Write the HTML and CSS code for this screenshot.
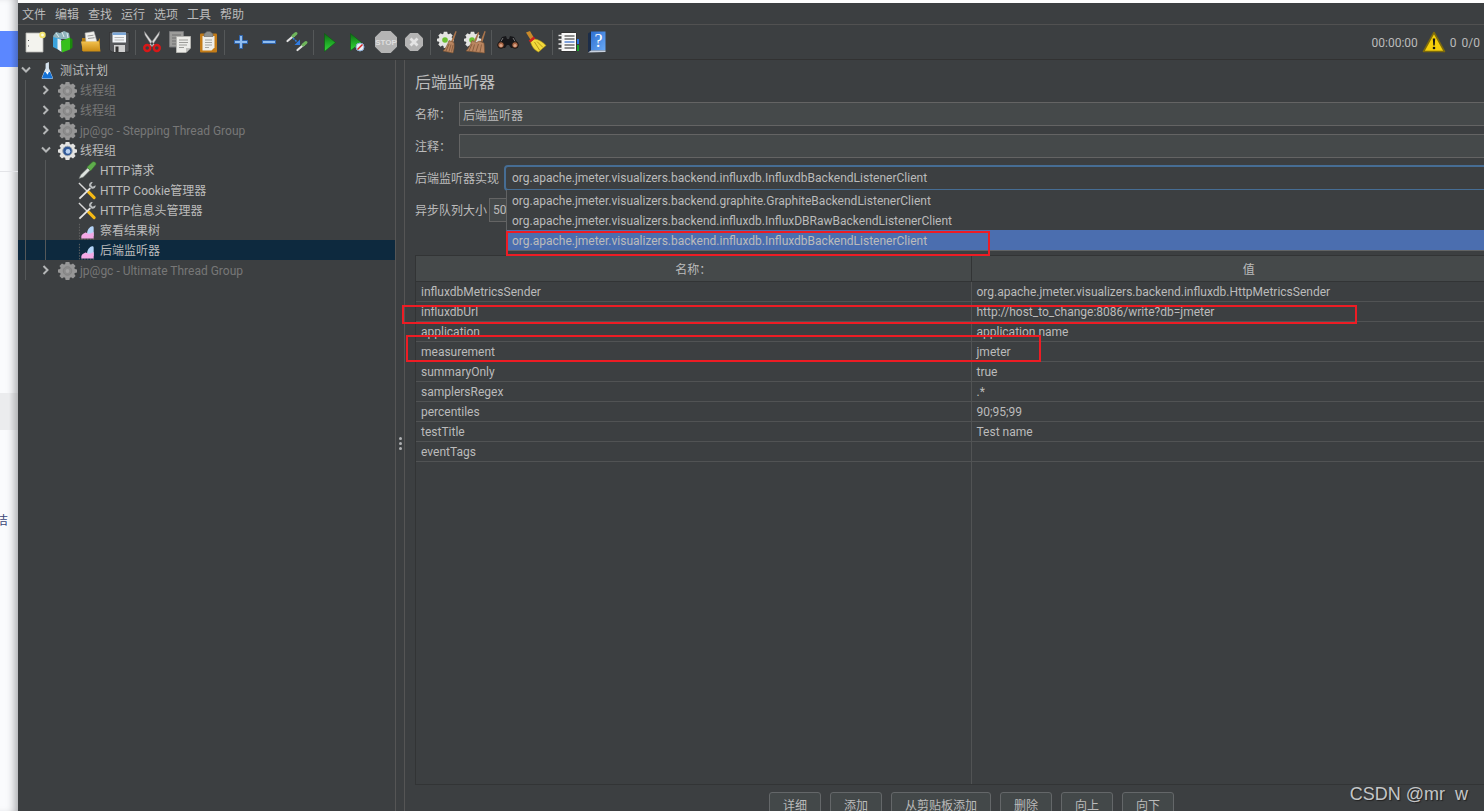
FILE: index.html
```html
<!DOCTYPE html>
<html lang="zh-CN">
	<head>
		<meta charset="UTF-8" />
		<meta name="viewport" content="width=device-width, initial-scale=1.0" />
		<title>后端监听器</title>
		<link rel="stylesheet" href="styles.css">
	</head>
	<body>
		<svg class="defs" aria-hidden="true">
			<defs>
				<linearGradient id="g-green" x1="0" y1="0" x2="0" y2="1">
					<stop offset="0" stop-color="#0d6b12" />
					<stop offset="0.5" stop-color="#1fa726" />
					<stop offset="1" stop-color="#35d83a" />
				</linearGradient>
				<linearGradient id="g-gold" x1="0" y1="0" x2="0" y2="1">
					<stop offset="0" stop-color="#f2c14e" />
					<stop offset="1" stop-color="#c98a12" />
				</linearGradient>
				<linearGradient id="g-blue" x1="0" y1="0" x2="1" y2="1">
					<stop offset="0" stop-color="#2d6fd0" />
					<stop offset="1" stop-color="#69a9f5" />
				</linearGradient>
				<path id="gear" d="M8 1h4l0.500 2.300 1.300 0.500 2-1.300 2.700 2.700-1.300 2 0.500 1.300L20 9v3l-2.300 0.500-0.500 1.300 1.300 2-2.700 2.700-2-1.300-1.300 0.500L12 20H8l-0.500-2.300-1.300-0.500-2 1.300-2.700-2.700 1.300-2-0.500-1.300L0 12V9l2.300-0.500 0.500-1.300-1.300-2 2.700-2.700 2 1.300 1.300-0.500z" />
			</defs>
			<symbol id="i-gear-off" viewBox="0 0 20 20">
				<use href="#gear" fill="#979797" />
				<circle cx="10" cy="10.500" r="4.500" fill="#8c8c8c" stroke="#828282" />
				<circle cx="10" cy="10.500" r="2" fill="#a2a2a2" />
			</symbol>
			<symbol id="i-gear-on" viewBox="0 0 20 20">
				<use href="#gear" fill="#e4e4e2" />
				<circle cx="10" cy="10.500" r="5" fill="#2f5796" stroke="#9aa3ae" />
				<circle cx="10.500" cy="11" r="2.500" fill="#b9d2f2" />
			</symbol>
			<symbol id="i-flask" viewBox="0 0 20 20">
				<path d="M8 2.500L11.500 1v6.500l4 9.500c0.500 1.500-0.500 2-1.500 2H5.500c-1 0-2-0.500-1.500-2l4-9.500z" fill="#d4e2ee" />
				<path d="M6.800 11.500h6l2.400 5.800c0.200 0.800-0.200 1.200-1 1.200H5.400c-0.800 0-1.200-0.400-1-1.200z" fill="#1271d6" />
				<path d="M8 11.500h3.500l-1.500 3z" fill="#fff" />
			</symbol>
			<symbol id="i-dropper" viewBox="0 0 20 20">
				<path d="M1 18.500l2-4L10.500 7l2.500 2.500L5.500 17z" fill="#dfe3e0" stroke="#6f7573" stroke-width="0.600" />
				<path d="M9.500 6.500l1.300-1.300L15 1.200c1.500-1.200 3.800-0.200 4 1.600 0 0.800-0.300 1.200-0.800 1.800L14.500 9l-1.300 1.300z" fill="#5fae4c" stroke="#39742c" stroke-width="0.600" />
			</symbol>
			<symbol id="i-tools" viewBox="0 0 20 20">
				<path d="M1 2l9 9" stroke="#d8d8d8" stroke-width="1.500" />
				<path d="M11 11.500l6 6" stroke="#f5b914" stroke-width="3.200" stroke-linecap="round" />
				<path d="M1.500 18.500L13 7.500" stroke="#e4e4e4" stroke-width="2" />
				<path d="M18.500 4.500l-3 1.500-1.800-1.800L15.500 1c-2.500-0.200-4.500 2-3.700 4.500l2.700 2.700c2.500 0.500 4.500-1.500 4-3.700z" fill="#b9bcbd" />
			</symbol>
			<symbol id="i-graph" viewBox="0 0 20 20">
				<path d="M1.500 3v16H18" stroke="#666" stroke-width="1" stroke-dasharray="1.500 1.500" fill="none" />
				<path d="M9.500 14c0-4.500 2.500-8 5.500-8.500 1-0.200 1.500 0.500 1.500 1.500V16z" fill="#b4d4f8" />
				<path d="M3.500 18.500V16c0.500-2 2-3 3.500-3.500 1.500-1 2.500 0.500 4 1 2 0 3.500-1 5.500-2v7z" fill="#f3a9e6" />
			</symbol>
			<symbol id="i-new" viewBox="0 0 24 24">
				<path d="M3 3h17v19H3z" fill="#f3f3ee" stroke="#b5b5b0" stroke-width="0.800" />
				<path d="M5 10.500h1M5 16h1" stroke="#555" />
				<circle cx="19.500" cy="5" r="3.200" fill="#f2e36a" />
				<circle cx="19.500" cy="5" r="1.400" fill="#fffde0" />
			</symbol>
			<symbol id="i-templates" viewBox="0 0 24 24">
				<path d="M2 6l3-4 4 1 4-2 5 2 1 6H3z" fill="#8fb3bc" />
				<path d="M5 3l3 4M11 2l2 5M16 3l1 5" stroke="#dfeaec" />
				<path d="M2 7l8 2v12l-8-4z" fill="#3aa3dd" />
				<path d="M6.500 8.500l4 1.500v12l-4-3z" fill="#e7f2f5" />
				<path d="M10 11l9-3.500v12L11 22.500z" fill="#37c01b" />
				<path d="M19 7.500l2.500 2v8L19 19.500z" fill="#1b8a0c" />
			</symbol>
			<symbol id="i-open" viewBox="0 0 24 24">
				<path d="M3 8h4l2 3h10l2-3v13H3z" fill="#b07a10" />
				<path d="M6 3l9-1.500L18 12H7z" fill="#f0f0ec" stroke="#aaa" stroke-width="0.600" />
				<path d="M8.500 6l6-0.800M9 8.500l6.500-0.800" stroke="#999" />
				<path d="M2 11.500h18l1.500 10H4z" fill="url(#g-gold)" />
			</symbol>
			<symbol id="i-save" viewBox="0 0 24 24">
				<path d="M2.500 2.500H22V22H5l-2.500-2z" fill="#55575a" stroke="#2b2c2e" stroke-width="0.600" />
				<path d="M5.500 2.500H19v10H5.500z" fill="#f1f4f7" />
				<path d="M5.500 2.500H19V5H5.500z" fill="#7ba7d8" />
				<path d="M7.500 7.500h9.500M7.500 10h9.500" stroke="#b6b6b6" />
				<path d="M7 15h11v7H7z" fill="#cfcfcf" />
				<path d="M8.500 16.500h3V22h-3z" fill="#333" />
			</symbol>
			<symbol id="i-cut" viewBox="0 0 24 24">
				<path d="M4.500 1.500l10 13.500-2 1.500L5 5zM19.500 1.500l-10 13.500 2 1.500L19 5z" fill="#dcdcdc" stroke="#888" stroke-width="0.500" />
				<ellipse cx="7.200" cy="18" rx="3" ry="3" fill="none" stroke="#d81818" stroke-width="2.400" />
				<ellipse cx="16.800" cy="18" rx="3" ry="3" fill="none" stroke="#d81818" stroke-width="2.400" />
			</symbol>
			<symbol id="i-copy" viewBox="0 0 24 24">
				<path d="M1.500 1.500h14V17h-14z" fill="#9c9c9a" stroke="#77787a" />
				<path d="M4 5h9M4 8h4M4 11h4M4 14h4" stroke="#707070" />
				<path d="M8.500 6.500h14V18L18 22.500H8.500z" fill="#ecece8" stroke="#b4b4b0" />
				<path d="M11 10h9M11 12.500h9M11 15h8M11 17.500h5" stroke="#9c9c98" />
				<path d="M22.500 18H18v4.500z" fill="#bfbfbb" />
			</symbol>
			<symbol id="i-paste" viewBox="0 0 24 24">
				<rect x="4" y="3.500" width="17" height="19" rx="1" fill="#c47c17" />
				<path d="M6.500 6h12v11.500l-3 3h-9z" fill="#efefeb" />
				<path d="M9 10h7M9 12.500h7M9 15h7M9 17.500h4" stroke="#a5a5a0" />
				<path d="M8 6.500V4l3-2.500h3L17 4v2.500z" fill="#8d8f8c" stroke="#5f605e" stroke-width="0.600" />
			</symbol>
			<symbol id="i-plus" viewBox="0 0 24 24">
				<path d="M10.500 5.500h3v5h5v3h-5v5h-3v-5h-5v-3h5z" fill="#8fbdf0" stroke="#2f63ab" />
			</symbol>
			<symbol id="i-minus" viewBox="0 0 24 24">
				<path d="M5.500 10.500h13v3h-13z" fill="#8fbdf0" stroke="#2f63ab" />
			</symbol>
			<symbol id="i-toggle" viewBox="0 0 24 24">
				<path d="M2.500 11L9 5.500" stroke="#e3e3e3" stroke-width="2.200" stroke-linecap="round" />
				<path d="M8 6L11 3.500" stroke="#6fb55c" stroke-width="3" stroke-linecap="round" />
				<path d="M12.500 20L19 14.500" stroke="#e3e3e3" stroke-width="2.200" stroke-linecap="round" />
				<path d="M18 15L21 12.500" stroke="#6fb55c" stroke-width="3" stroke-linecap="round" />
				<path d="M8 8l5 5" stroke="#2f7be0" stroke-width="1.500" stroke-dasharray="2 1" />
				<path d="M15 9.500v5.500H9.500z" fill="#2f7be0" />
			</symbol>
			<symbol id="i-start" viewBox="0 0 24 24">
				<path d="M6.500 3.500L17.500 12.500 6.500 21.500z" fill="url(#g-green)" stroke="#0c5c10" stroke-width="0.600" />
			</symbol>
			<symbol id="i-start-now" viewBox="0 0 24 24">
				<path d="M4.500 3.500L15.500 12.500 4.500 20.500z" fill="url(#g-green)" stroke="#0c5c10" stroke-width="0.600" />
				<circle cx="14" cy="17" r="4" fill="#e9eef4" stroke="#8fb0d8" />
				<path d="M11.500 19.500l5-5" stroke="#d42020" stroke-width="1.500" />
			</symbol>
			<symbol id="i-shutdown" viewBox="0 0 24 24">
				<path d="M8.200 3h7.600L21 8.200v7.600L15.800 21H8.200L3 15.800V8.200z" fill="#b4b4b4" />
				<path d="M8.500 8.500l7 7M15.500 8.500l-7 7" stroke="#e4e4e4" stroke-width="2.800" />
			</symbol>
			<symbol id="i-clear" viewBox="0 0 24 24">
				<svg x="2" y="1" width="17" height="17" viewBox="0 0 20 20"><use href="#gear" fill="#e4e4e2" /></svg>
				<circle cx="10" cy="10" r="2.800" fill="#6cc032" />
				<path d="M20.500 1l1.200 0.600-3.700 11-2-1z" fill="#a9744c" />
				<path d="M14 10.500l5 2c0.500 4 0 7-1 10.500L8 21c2.500-2.500 4.500-6 6-10.500z" fill="#b98560" stroke="#79502f" stroke-width="0.600" />
				<path d="M14 14l-3 7M16 14.500l-2 7M18 15l-1.500 6.500" stroke="#7f5637" stroke-width="0.800" />
			</symbol>
			<symbol id="i-clear-all" viewBox="0 0 24 24">
				<svg x="1" y="1" width="17" height="17" viewBox="0 0 20 20"><use href="#gear" fill="#e4e4e2" /></svg>
				<circle cx="9" cy="10" r="2.800" fill="#6cc032" />
				<path d="M15 2l1.200 0.600-3.200 9.500-2-1zM21.500 1l1.200 0.600-3.200 10.500-2-1z" fill="#a9744c" />
				<path d="M9 10.500l4.500 2 2.500-1.500 5 2c0.500 4 0.500 6.500 0.500 10L3 21c2.500-2.500 4.500-6 6-10.500z" fill="#b98560" stroke="#79502f" stroke-width="0.600" />
				<path d="M9 14l-3 7M11.500 14.500l-2 7M15.500 14l-2.500 7.500M18.500 14.500L17 22" stroke="#7f5637" stroke-width="0.800" />
			</symbol>
			<symbol id="i-search" viewBox="0 0 24 24">
				<path d="M6 7l4-1 1 3h2l1-3 4 1 4 7v4h-7l-2-3h-2l-2 3H2v-4z" fill="#17171a" />
				<path d="M7 8l-3 5M17 8l3 5" stroke="#777" />
				<circle cx="5" cy="15" r="3.300" fill="#a76443" stroke="#111" />
				<circle cx="19" cy="15" r="3.300" fill="#a76443" stroke="#111" />
				<circle cx="5" cy="15.500" r="1.600" fill="#d9a488" />
				<circle cx="19" cy="15.500" r="1.600" fill="#d9a488" />
			</symbol>
			<symbol id="i-broom" viewBox="0 0 24 24">
				<path d="M2 2.500L6 1l4 7-3 2.500z" fill="#c98a2a" />
				<path d="M10 9c4 0 9 3 12 6.500L14.500 22C10.500 20.500 7.500 16 6.500 12z" fill="#f2d93b" stroke="#a98b10" stroke-width="0.600" />
				<path d="M10.500 12l5 8M13 11.500l6 6" stroke="#b99a18" />
				<path d="M5.500 11.500L10.500 7.500" stroke="#d02020" stroke-width="2.600" />
			</symbol>
			<symbol id="i-function" viewBox="0 0 24 24">
				<path d="M4 2.500h15.500V21.500H4z" fill="#fafafa" stroke="#333" />
				<path d="M7.500 6h10M7.500 9h10M7.500 15h10M7.500 18h10" stroke="#222" stroke-width="1.200" />
				<path d="M7.500 12h10" stroke="#2a65c8" stroke-width="1.200" />
				<path d="M1.500 5.500h5M1.500 9.500h5M1.500 14h5M1.500 18.500h5" stroke="#e8e8e8" stroke-width="1.600" />
				<path d="M20 9h2v5h-2z" fill="#2a72e0" />
				<path d="M20 15h2v6h-2z" fill="#19a02a" />
			</symbol>
			<symbol id="i-warning" viewBox="0 0 24 24">
				<path d="M12 2.500L22.500 21.500h-21z" fill="#f5cf0a" stroke="#7d6a0c" stroke-width="1.600" stroke-linejoin="round" />
				<path d="M10.800 8.500h2.400l-0.500 7h-1.400z" fill="#161616" />
				<circle cx="12" cy="18" r="1.300" fill="#161616" />
			</symbol>
			<symbol id="i-right" viewBox="0 0 16 16">
				<path d="M5.500 4l4 4-4 4" fill="none" stroke="#b4b6b7" stroke-width="2" />
			</symbol>
			<symbol id="i-down" viewBox="0 0 16 16">
				<path d="M4 5.500l4 4 4-4" fill="none" stroke="#b4b6b7" stroke-width="2" />
			</symbol>
		</svg>

		<aside class="backdrop">
			<div class="backdrop-head"></div>
			<div class="backdrop-blue"></div>
			<div class="backdrop-card"></div>
			<div class="backdrop-page"></div>
			<div class="backdrop-block"></div>
			<p class="backdrop-text"><span>洁</span></p>
		</aside>

		<div class="app">
			<nav class="menubar">
				<button>文件</button>
				<button>编辑</button>
				<button>查找</button>
				<button>运行</button>
				<button>选项</button>
				<button>工具</button>
				<button>帮助</button>
			</nav>

			<div class="toolbar">
				<button class="tool" aria-label="新建"><svg><use href="#i-new" /></svg></button>
				<button class="tool" aria-label="模板"><svg><use href="#i-templates" /></svg></button>
				<button class="tool" aria-label="打开"><svg><use href="#i-open" /></svg></button>
				<button class="tool" aria-label="保存"><svg><use href="#i-save" /></svg></button>
				<span class="sep"></span>
				<button class="tool" aria-label="剪切"><svg><use href="#i-cut" /></svg></button>
				<button class="tool" aria-label="复制"><svg><use href="#i-copy" /></svg></button>
				<button class="tool" aria-label="粘贴"><svg><use href="#i-paste" /></svg></button>
				<span class="sep"></span>
				<button class="tool" aria-label="展开全部"><svg><use href="#i-plus" /></svg></button>
				<button class="tool" aria-label="折叠全部"><svg><use href="#i-minus" /></svg></button>
				<button class="tool" aria-label="切换"><svg><use href="#i-toggle" /></svg></button>
				<span class="sep"></span>
				<button class="tool" aria-label="启动"><svg><use href="#i-start" /></svg></button>
				<button class="tool" aria-label="不停顿开始"><svg><use href="#i-start-now" /></svg></button>
				<button class="tool" aria-label="停止" disabled>
					<svg viewBox="0 0 24 24">
						<path d="M7.300 1h9.400L23 7.300v9.400L16.700 23H7.300L1 16.700V7.300z" fill="#b4b4b4" />
						<text x="12" y="15" text-anchor="middle" class="stop-text">STOP</text>
					</svg>
				</button>
				<button class="tool" aria-label="关闭" disabled><svg><use href="#i-shutdown" /></svg></button>
				<span class="sep"></span>
				<button class="tool" aria-label="清除"><svg><use href="#i-clear" /></svg></button>
				<button class="tool" aria-label="清除全部"><svg><use href="#i-clear-all" /></svg></button>
				<span class="sep"></span>
				<button class="tool" aria-label="查找"><svg><use href="#i-search" /></svg></button>
				<button class="tool" aria-label="重置搜索"><svg><use href="#i-broom" /></svg></button>
				<span class="sep"></span>
				<button class="tool" aria-label="函数助手"><svg><use href="#i-function" /></svg></button>
				<button class="tool" aria-label="帮助">
					<svg viewBox="0 0 24 24">
						<path d="M3 3.500l3-2v19l-3 2z" fill="#1c2d48" />
						<path d="M6 1.500h14.500v19H6z" fill="url(#g-blue)" />
						<path d="M3 22.500l3-2h14.500v1.500z" fill="#c9d2df" />
						<text x="13.500" y="17" text-anchor="middle" class="help-text">?</text>
					</svg>
				</button>
				<div class="status">
					<span>00:00:00</span>
					<button class="warning" aria-label="日志"><svg><use href="#i-warning" /></svg></button>
					<span>0</span>
					<span>0/0</span>
				</div>
			</div>

			<div class="workspace">
				<ul class="tree">
					<li><svg class="arrow"><use href="#i-down" /></svg><svg class="icon"><use href="#i-flask" /></svg><span>测试计划</span></li>
					<li class="off"><i></i><svg class="arrow"><use href="#i-right" /></svg><svg class="icon"><use href="#i-gear-off" /></svg><span>线程组</span></li>
					<li class="off"><i></i><svg class="arrow"><use href="#i-right" /></svg><svg class="icon"><use href="#i-gear-off" /></svg><span>线程组</span></li>
					<li class="off"><i></i><svg class="arrow"><use href="#i-right" /></svg><svg class="icon"><use href="#i-gear-off" /></svg><span>jp@gc - Stepping Thread Group</span></li>
					<li><i></i><svg class="arrow"><use href="#i-down" /></svg><svg class="icon"><use href="#i-gear-on" /></svg><span>线程组</span></li>
					<li class="leaf"><i></i><i></i><svg class="icon"><use href="#i-dropper" /></svg><span>HTTP请求</span></li>
					<li class="leaf"><i></i><i></i><svg class="icon"><use href="#i-tools" /></svg><span>HTTP Cookie管理器</span></li>
					<li class="leaf"><i></i><i></i><svg class="icon"><use href="#i-tools" /></svg><span>HTTP信息头管理器</span></li>
					<li class="leaf"><i></i><i></i><svg class="icon"><use href="#i-graph" /></svg><span>察看结果树</span></li>
					<li class="leaf selected"><i></i><i></i><svg class="icon"><use href="#i-graph" /></svg><span>后端监听器</span></li>
					<li class="off"><i></i><svg class="arrow"><use href="#i-right" /></svg><svg class="icon"><use href="#i-gear-off" /></svg><span>jp@gc - Ultimate Thread Group</span></li>
				</ul>

				<div class="splitter"><b></b><b></b><b></b></div>

				<main class="panel">
					<h1>后端监听器</h1>
					<div class="field">
						<label for="name">名称：</label>
						<input id="name" type="text" value="后端监听器">
					</div>
					<div class="field">
						<label for="comment">注释：</label>
						<input id="comment" type="text">
					</div>
					<div class="field">
						<label for="impl">后端监听器实现</label>
						<div class="combo">
							<select id="impl">
								<option>org.apache.jmeter.visualizers.backend.influxdb.InfluxdbBackendListenerClient</option>
							</select>
							<ul class="popup" role="listbox" aria-label="后端监听器实现">
								<li role="option">org.apache.jmeter.visualizers.backend.graphite.GraphiteBackendListenerClient</li>
								<li role="option">org.apache.jmeter.visualizers.backend.influxdb.InfluxDBRawBackendListenerClient</li>
								<li role="option" aria-selected="true" class="selected">org.apache.jmeter.visualizers.backend.influxdb.InfluxdbBackendListenerClient</li>
							</ul>
							<span class="mark mark-option"></span>
						</div>
					</div>
					<div class="field tight">
						<label for="queue">异步队列大小</label>
						<input id="queue" type="text" value="5000">
					</div>

					<div class="params">
						<table>
							<thead>
								<tr><th>名称：</th><th>值</th></tr>
							</thead>
							<tbody>
								<tr><td>influxdbMetricsSender</td><td>org.apache.jmeter.visualizers.backend.influxdb.HttpMetricsSender</td></tr>
								<tr><td>influxdbUrl</td><td>http://host_to_change:8086/write?db=jmeter</td></tr>
								<tr><td>application</td><td>application name</td></tr>
								<tr><td>measurement</td><td>jmeter</td></tr>
								<tr><td>summaryOnly</td><td>true</td></tr>
								<tr><td>samplersRegex</td><td>.*</td></tr>
								<tr><td>percentiles</td><td>90;95;99</td></tr>
								<tr><td>testTitle</td><td>Test name</td></tr>
								<tr><td>eventTags</td><td></td></tr>
							</tbody>
						</table>
						<span class="mark mark-url"></span>
						<span class="mark mark-measurement"></span>
					</div>

					<div class="actions">
						<button>详细</button>
						<button>添加</button>
						<button>从剪贴板添加</button>
						<button>删除</button>
						<button>向上</button>
						<button>向下</button>
					</div>
				</main>
			</div>
		</div>

		<div class="watermark">CSDN @mr  w</div>
	</body>
</html>
```
FILE: styles.css
```css
* {
	box-sizing: border-box;
}
body {
	display: flex;
	height: 100vh;
	margin: 0;
	overflow: hidden;
	background: #fff;
	color: #bbb;
	font-family: Roboto, "Noto Sans CJK SC", sans-serif;
	font-size: 12px;
	line-height: 20px;
}
button,
input,
select {
	color: inherit;
	font: inherit;
}
ul {
	margin: 0;
	padding: 0;
	list-style: none;
}
.defs {
	position: absolute;
	width: 0;
	height: 0;
}

/* page behind the window */
.backdrop {
	display: flex;
	flex-direction: column;
	flex: none;
	width: 18px;
	background: #fafbfd;
	box-shadow: inset -8px 0 8px -5px #a6a7aa;
}
.backdrop-head {
	height: 31px;
}
.backdrop-blue {
	height: 36px;
	background: linear-gradient(90deg, #5b87ff 60%, #4a6cc8);
}
.backdrop-card {
	height: 105px;
	border-bottom: 1px solid #e3e4e8;
}
.backdrop-page {
	height: 221px;
}
.backdrop-block {
	height: 37px;
	background: linear-gradient(90deg, #ebecee 50%, #b5b6b8);
}
.backdrop-text {
	display: flex;
	justify-content: flex-end;
	width: 8px;
	margin: 81px 0 0;
	overflow: hidden;
	color: #3b4678;
}

.app {
	display: flex;
	flex-direction: column;
	flex: 1;
	min-width: 0;
	height: calc(100vh + 16px);
	border-top: 3px solid #fdfdfd;
	background: #3c3f41;
}
.menubar {
	display: flex;
	gap: 9px;
	height: 22px;
	padding-left: 4px;
	border-bottom: 1px solid #515151;
}
.menubar button {
	padding: 2px 0 0;
	border: 0;
	background: none;
}
.toolbar {
	display: flex;
	align-items: center;
	height: 35px;
	padding: 0 4px 0 3px;
	border-bottom: 1px solid #323232;
}
.tool,
.warning {
	display: flex;
	align-items: center;
	justify-content: center;
	width: 28px;
	height: 28px;
	padding: 0;
	border: 0;
	background: none;
}
.tool svg,
.warning svg {
	flex: none;
	width: 24px;
	height: 24px;
}
.stop-text {
	fill: #dedede;
	font: 700 8px "Liberation Sans", sans-serif;
}
.help-text {
	fill: #fff;
	font: 18px "Liberation Serif", serif;
}
.sep {
	width: 1px;
	height: 25px;
	margin: 0 2px;
	background: #555859;
}
.status {
	display: flex;
	align-items: center;
	gap: 5px;
	margin-left: auto;
}
.status span {
	padding-top: 1px;
}
.status .warning {
	width: 22px;
}

.workspace {
	display: flex;
	flex: 1;
	min-height: 0;
}
.tree {
	flex: none;
	width: 378px;
	border-right: 1px solid #555;
}
.tree li {
	display: flex;
	align-items: center;
	height: 20px;
	white-space: pre;
}
.tree span {
	padding-top: 2px;
}
.tree i {
	width: 20px;
	height: 20px;
	background: linear-gradient(#555859, #555859) 7px 0 / 1px 100% no-repeat;
}
.tree .arrow {
	width: 16px;
	height: 16px;
	margin-right: 4px;
}
.tree .icon {
	width: 19px;
	height: 19px;
	margin-right: 3px;
}
.tree .leaf .icon {
	margin-left: 20px;
}
.tree .off {
	color: #777;
}
.tree .selected {
	background: #0d293e;
}
.splitter {
	display: flex;
	flex-direction: column;
	flex: none;
	align-items: center;
	justify-content: center;
	gap: 2px;
	width: 9px;
	border-right: 1px solid #555;
}
.splitter b {
	width: 3px;
	height: 3px;
	border-radius: 50%;
	background: #afb1b3;
}

/* the window runs past the right edge of the screen */
.panel {
	display: flex;
	flex-direction: column;
	flex: 1;
	min-width: 0;
	margin-right: -44px;
	padding: 11px 0 11px 10px;
}
.panel h1 {
	margin: 0 0 3px;
	font-size: 16px;
	font-weight: 400;
	line-height: 24px;
}
.field {
	display: flex;
	align-items: center;
	gap: 8px;
	height: 32px;
}
.field label {
	flex: none;
	padding-top: 2px;
}
.field input {
	flex: 1;
	min-width: 0;
	height: 24px;
	padding: 0 3px;
	border: 1px solid #646464;
	background: #45494a;
}
.field.tight {
	gap: 2px;
}
.combo {
	position: relative;
	flex: 1;
	margin-left: -3px;
}
.combo select {
	display: block;
	width: 100%;
	height: 26px;
	padding: 0 6px;
	border: 2px solid #466d94;
	border-radius: 4px;
	outline: 0;
	background: #3c3f41;
	appearance: none;
}
.popup {
	position: absolute;
	top: 25px;
	right: 0;
	left: 2px;
	z-index: 1;
	border: 1px solid #616364;
	border-top: 0;
	background: #3c3f41;
}
.popup li {
	height: 20px;
	padding: 1px 0 0 5px;
}
.popup .selected {
	background: #4b6eaf;
}

.params {
	position: relative;
	flex: 1;
	margin-top: 29px;
	border: 1px solid #323435;
	background: linear-gradient(#515354, #515354) 50% 0 / 1px 100% no-repeat;
}
.params table {
	width: 100%;
	border-spacing: 0;
	table-layout: fixed;
}
.params th {
	height: 26px;
	padding: 3px 0 0;
	border-right: 1px solid #323435;
	border-bottom: 1px solid #323435;
	background: #45494a;
	font-weight: 400;
}
.params td {
	height: 20px;
	padding: 1px 5px 0;
	border-right: 1px solid #515354;
	border-bottom: 1px solid #515354;
	line-height: 18px;
}
.params td:empty {
	padding: 0;
}
.mark {
	position: absolute;
	z-index: 2;
	border: 2px solid #ed1c24;
	pointer-events: none;
}
.mark-option {
	top: 66px;
	left: 2px;
	width: 484px;
	height: 25px;
}
.mark-url {
	top: 49px;
	left: -14px;
	width: 955px;
	height: 19px;
}
.mark-measurement {
	top: 79px;
	left: -10px;
	width: 635px;
	height: 27px;
}

.actions {
	display: flex;
	justify-content: center;
	gap: 9px;
	margin-top: 7px;
}
.actions button {
	height: 24px;
	padding: 3px 13px 0;
	border: 1px solid #646769;
	border-radius: 3px;
	background: #434849;
}

.watermark {
	position: absolute;
	right: 16px;
	bottom: 6px;
	color: #c4c6c7;
	font-family: "Liberation Sans", sans-serif;
	font-size: 18px;
	line-height: 22px;
	text-shadow: 1px 1px 1px #222;
	white-space: pre;
}
```
